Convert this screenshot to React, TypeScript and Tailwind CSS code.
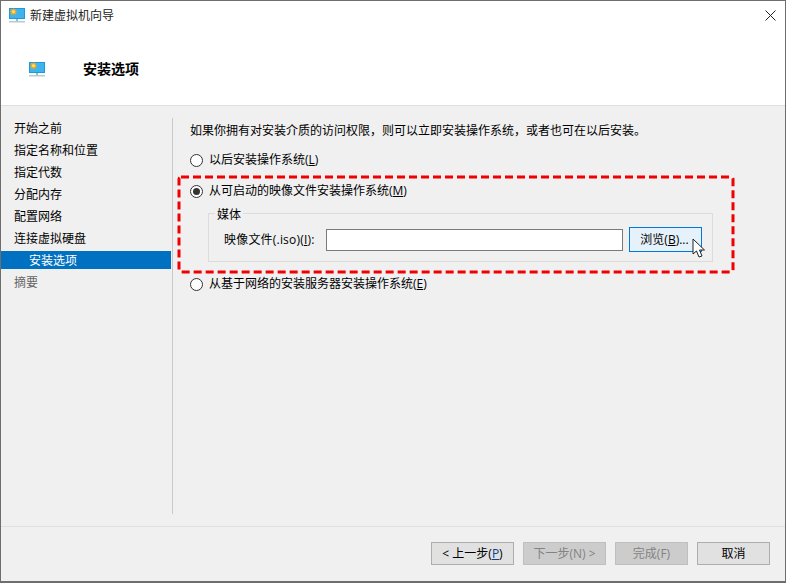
const FONT = "font-['Segoe_UI','Open_Sans','Noto_Sans_CJK_SC',sans-serif]";

function MonitorIcon({ className }: { className: string }) {
  return (
    <svg viewBox="0 0 16 15" className={className}>
      <rect x="0" y="0" width="16" height="11" fill="#1d9ade" />
      <rect x="1" y="1" width="14" height="9" fill="#3fb4ec" />
      <path d="M4.5 0 L5.3 1.6 L7 1 L6.6 2.8 L8.4 3.6 L6.8 4.6 L7.4 6.4 L5.5 6 L4.5 7.6 L3.5 6 L1.6 6.4 L2.2 4.6 L0.6 3.6 L2.4 2.8 L2 1 L3.7 1.6 Z" fill="#f6a91b" />
      <circle cx="4.5" cy="3.7" r="1.4" fill="#fde68a" />
      <rect x="7" y="11" width="2" height="2" fill="#9fb8c8" />
      <rect x="0" y="13" width="16" height="1.5" fill="#b4cad8" />
    </svg>
  );
}

function Radio({ checked }: { checked?: boolean }) {
  return (
    <span className="flex h-[13px] w-[13px] shrink-0 items-center justify-center rounded-full border border-[#333] bg-white">
      {checked ? <span className="h-[7px] w-[7px] rounded-full bg-[#333]" /> : null}
    </span>
  );
}

function RadioRow({ label, mnemonic, checked }: { label: string; mnemonic: string; checked?: boolean }) {
  return (
    <div className="flex h-[18px] items-center gap-[6px]">
      <Radio checked={checked} />
      <span>
        {label}(<span className="underline">{mnemonic}</span>)
      </span>
    </div>
  );
}

function FooterButton({ w, disabled, children }: { w: string; disabled?: boolean; children: React.ReactNode }) {
  return (
    <div
      className={`flex h-[23px] items-center justify-center border ${w} ${
        disabled ? "border-[#bfbfbf] bg-[#cccccc] text-[#838383]" : "border-[#adadad] bg-[#e1e1e1] text-black"
      }`}
    >
      {children}
    </div>
  );
}

const steps = ["开始之前", "指定名称和位置", "指定代数", "分配内存", "配置网络", "连接虚拟硬盘"];

export default function App() {
  return (
    <div className={`relative h-[583px] w-[787px] bg-white text-[12px] leading-none text-black ${FONT}`}>
      <div className="flex h-[583px] w-[786px] flex-col border border-b-2 border-[#6e6e6e] bg-[#f0f0f0]">
        {/* title bar + heading */}
        <div className="flex h-[105px] flex-col border-b border-[#dfdfdf] bg-white">
          <div className="flex h-[29px] items-center pl-[8px] pr-[9px]">
            <MonitorIcon className="h-[15px] w-[16px]" />
            <span className="ml-[5px] text-[#222]">新建虚拟机向导</span>
            <svg viewBox="0 0 11 11" className="ml-auto h-[11px] w-[11px]">
              <path d="M0.5 0.5 L10.5 10.5 M10.5 0.5 L0.5 10.5" stroke="#222" strokeWidth="1" />
            </svg>
          </div>
          <div className="mt-[24px] flex h-[30px] items-center pl-[28px]">
            <MonitorIcon className="h-[15px] w-[16px]" />
            <span className="ml-[38px] text-[14px] font-bold">安装选项</span>
          </div>
        </div>

        {/* body */}
        <div className="flex h-[421px] border-b border-[#dfdfdf]">
          <div className="w-[170px] pt-[12px]">
            {steps.map((s) => (
              <div key={s} className="flex h-[22px] items-center pl-[13px]">
                {s}
              </div>
            ))}
            <div className="mt-[1px] flex h-[18px] items-center bg-[#0070c0] pl-[28px] pt-[1px] text-white">安装选项</div>
            <div className="mt-[3px] flex h-[22px] items-center pl-[13px] text-[#666]">摘要</div>
          </div>
          <div className="mt-[12px] mb-[12px] ml-[1px] w-px bg-[#c8c8c8]" />
          <div className="flex-1 pl-[17px] pt-[17px]">
            <p className="flex h-[16px] items-center">
              如果你拥有对安装介质的访问权限，则可以立即安装操作系统，或者也可在以后安装。
            </p>
            <div className="mt-[12px]">
              <RadioRow label="以后安装操作系统" mnemonic="L" />
            </div>
            <div className="mt-[13px]">
              <RadioRow label="从可启动的映像文件安装操作系统" mnemonic="M" checked />
            </div>
            <div className="relative ml-[18px] mt-[13px] h-[49px] w-[505px] border border-[#dcdcdc]">
              <span className="absolute -top-[5px] left-[6px] bg-[#f0f0f0] px-[2px]">媒体</span>
              <div className="flex items-center pl-[15px] pt-[13px]">
                <span className="w-[102px] tracking-[0.2px]">
                  映像文件(.iso)(<span className="underline">I</span>):
                </span>
                <div className="h-[22px] w-[297px] border border-[#7a7a7a] bg-white" />
                <div className="ml-[6px] flex h-[25px] w-[73px] items-center justify-center border border-[#0078d7] bg-[#e5f1fb] pr-[2px]">
                  浏览(<span className="underline">B</span>)...
                </div>
              </div>
            </div>
            <div className="mt-[13px]">
              <RadioRow label="从基于网络的安装服务器安装操作系统" mnemonic="E" />
            </div>
          </div>
        </div>

        {/* footer */}
        <div className="flex flex-1 justify-end pr-[15px] pt-[15px]">
          <FooterButton w="w-[83px]">
            &lt; 上一步(<span className="text-[#0b3f8f] underline">P</span>)
          </FooterButton>
          <div className="w-[9px]" />
          <FooterButton w="w-[83px]" disabled>
            下一步(N) &gt;
          </FooterButton>
          <div className="w-[9px]" />
          <FooterButton w="w-[73px]" disabled>
            完成(F)
          </FooterButton>
          <div className="w-[9px]" />
          <FooterButton w="w-[73px]">取消</FooterButton>
        </div>
      </div>

      {/* red annotation box */}
      <svg className="absolute left-[176px] top-[174px] h-[101px] w-[560px]" viewBox="0 0 560 101" fill="none">
        <rect x="3" y="3" width="554" height="95" rx="2" stroke="#f00000" strokeWidth="3" strokeDasharray="8 4" />
      </svg>

      {/* mouse cursor */}
      <svg className="absolute left-[692px] top-[238px] h-[21px] w-[14px]" viewBox="0 0 14 21">
        <path d="M1 1 L1 16 L4.5 13 L7 19 L10 18 L7.5 12 L12.5 12 Z" fill="#fff" stroke="#222" strokeWidth="1" strokeLinejoin="round" />
      </svg>
    </div>
  );
}
